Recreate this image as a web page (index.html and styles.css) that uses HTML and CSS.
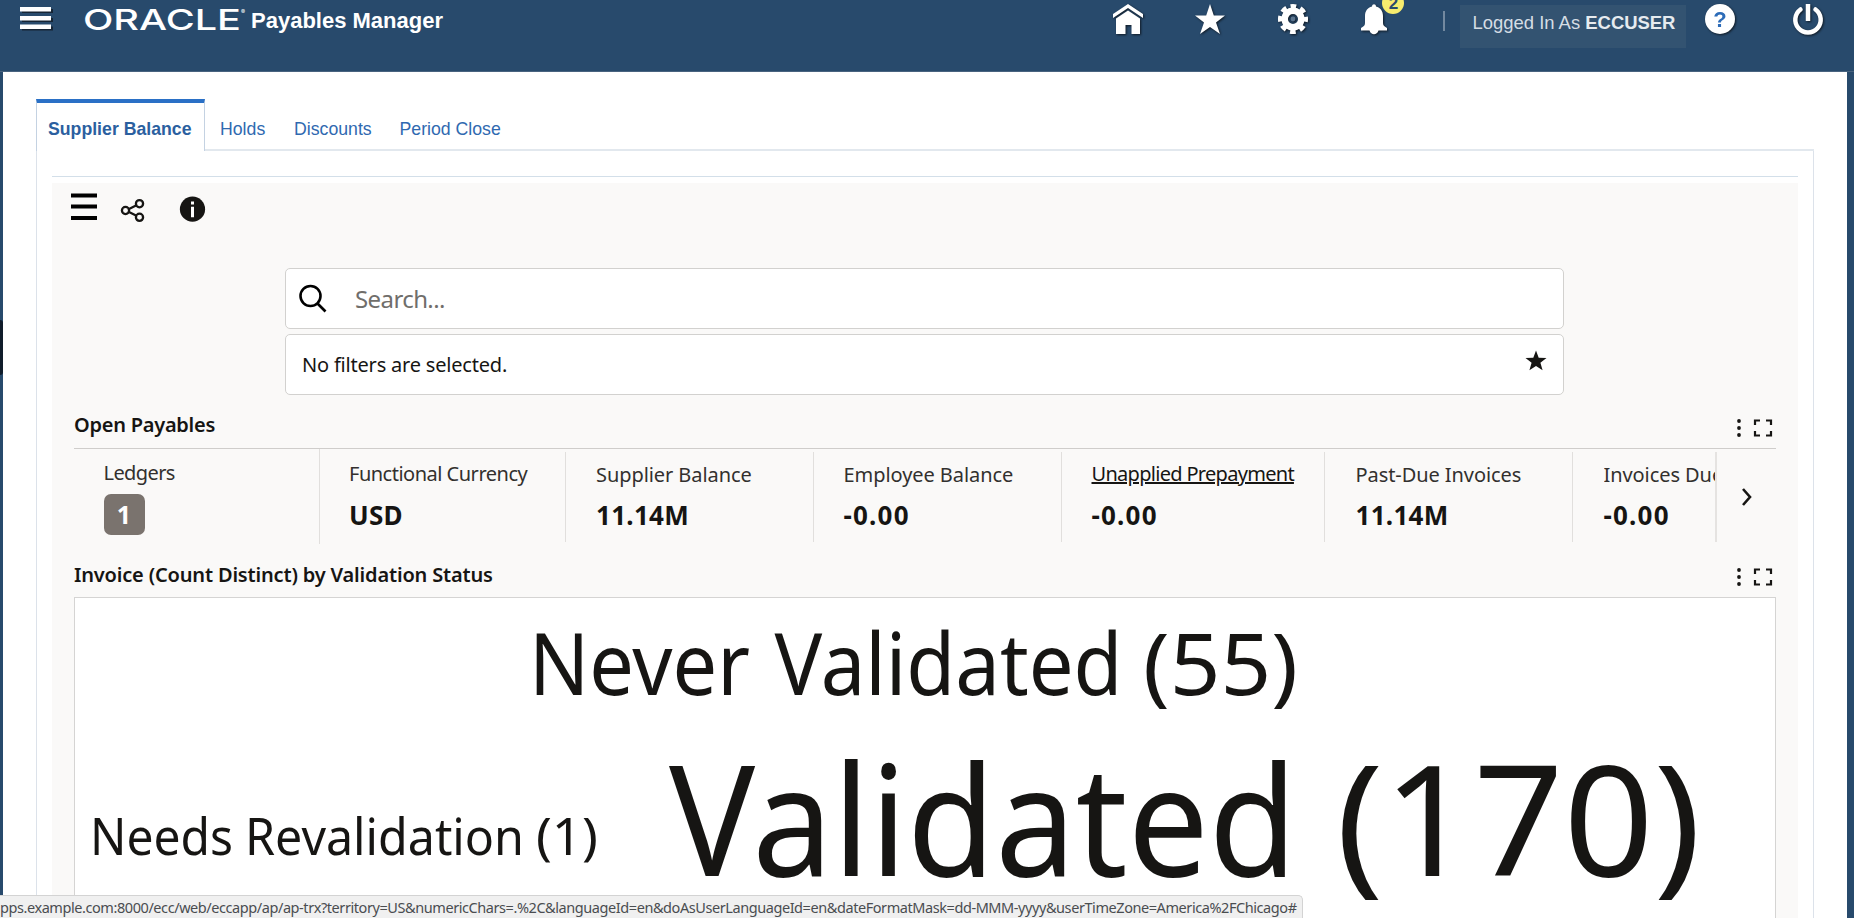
FILE: index.html
```
<!DOCTYPE html>
<html lang="en">
<head>
<meta charset="utf-8">
<title>Payables Manager</title>
<link rel="stylesheet" href="styles.css">
</head>
<body>
<header class="topbar">
  <svg class="menu-icon" width="36" height="28" viewBox="0 0 36 28"><g fill="#111c28" opacity=".8"><path d="M3 4h31v4H3zM3 13h31v4H3zM3 21.500h31v4H3z"/></g><g fill="#fff"><path d="M1 2h31v4.500H1zM1 11h31v4.500H1zM1 19.500h31v4.500H1z"/></g></svg>
  <svg class="logo" width="162" height="32" viewBox="0 0 162 32"><text x="-1" y="24" textLength="158" lengthAdjust="spacingAndGlyphs">ORACLE</text><text class="logo-mark" x="157" y="8">®</text></svg>
  <h1 class="app-title">Payables Manager</h1>
  <div class="tools">
    <svg class="tool" width="34" height="34" viewBox="0 0 34 34"><path fill="#fff" d="M16 0 31 10v4L16 4 1 14v-4zM4 14.500 16 6.500l12 8V30h-8.500V21h-6v9H4z"/></svg>
    <svg class="tool" width="34" height="34" viewBox="0 0 34 34"><path fill="#fff" d="m16 0 3.800 11.400H31l-9 7 4 11.600-10-7-10 7 4-11.600-9-7h11.200z"/></svg>
    <svg class="tool" width="34" height="34" viewBox="0 0 34 34"><g fill="none" stroke="#fff"><circle cx="16" cy="15" r="8.300" stroke-width="6.500"/><circle cx="16" cy="15" r="12.800" stroke-width="4.500" stroke-dasharray="5.600 4.453" stroke-dashoffset="2.800"/></g><circle cx="16" cy="15" r="2.400" fill="#5d7690"/></svg>
    <div class="bell"><svg class="tool" width="34" height="34" viewBox="0 0 34 34"><path fill="#fff" d="M13 2.500C13-.5 17-.5 17 2.500 21.500 3.800 24 7 24 12v7c0 2 1 3.500 4 5v2.500h-8.500C18 31.500 12 31.500 10.500 26.500H2V24c3-1.500 4-3 4-5v-7c0-5 2.500-8.200 7-9.500z"/></svg><span class="badge">2</span></div>
    <span class="divider"></span>
    <div class="user">Logged In As <b>ECCUSER</b></div>
    <svg class="tool help" width="34" height="34" viewBox="0 0 34 34"><circle cx="16" cy="15" r="15" fill="#fff"/><text class="help-mark" x="16" y="23" text-anchor="middle">?</text></svg>
    <svg class="tool" width="34" height="34" viewBox="0 0 34 34"><g fill="none" stroke="#fff" stroke-width="4.500"><path d="M8.500 5.500a12.700 12.700 0 1 0 15 0" stroke-linecap="round"/><path d="M16 0v17"/></g></svg>
  </div>
</header>
<main class="page">
  <nav class="tabs">
    <a class="tab active">Supplier Balance</a><a class="tab holds">Holds</a><a class="tab disc">Discounts</a><a class="tab close">Period Close</a>
  </nav>
  <div class="frame">
    <div class="panel">
      <div class="actions">
        <svg width="150" height="40" viewBox="0 0 150 40"><path d="M1 10.500h26v4H1zM1 21.500h26v4H1zM1 33h26v4H1z"/><g fill="none" stroke="#161513" stroke-width="2.300"><circle cx="55.500" cy="27.500" r="3.600"/><circle cx="69.500" cy="20.700" r="3.600"/><circle cx="69.500" cy="34.300" r="3.600"/><path d="m59 26 7-3.500M59 29l7 3.500"/></g><circle cx="122.500" cy="26.200" r="12.600" fill="#161513"/><path fill="#fff" d="M121 18.500h3v3h-3zM121 23.700h3v10.500h-3z"/></svg>
      </div>
      <div class="searchbox">
        <svg width="30" height="30" viewBox="0 0 30 30" fill="none" stroke="#000" stroke-width="2.600"><circle cx="11.500" cy="12" r="10"/><path d="m18.500 19.500 8 8"/></svg>
        <span class="placeholder">Search...</span>
      </div>
      <div class="filterbox"><span class="nofilter">No filters are selected.</span><svg width="22" height="22" viewBox="0 0 22 22"><path fill="#161513" d="m11 .5 2.700 7.200 7.800.3-6.100 4.700 2.200 7.600L11 15.900l-6.600 4.400 2.200-7.600L.5 8l7.800-.3z"/></svg></div>
      <div class="section-head first"><h2 class="t1">Open Payables</h2>
        <svg width="40" height="20" viewBox="0 0 40 20"><g fill="#161513"><circle cx="3" cy="3" r="1.900"/><circle cx="3" cy="10" r="1.900"/><circle cx="3" cy="17" r="1.900"/></g><path fill="none" stroke="#161513" stroke-width="2.200" d="M19 7V2.500h5M30 2.500h5V7M19 13v4.500h5M30 17.500h5V13"/></svg></div>
      <div class="kpis">
        <div class="kpi k1"><span class="label">Ledgers</span><span class="chip">1</span></div>
        <div class="kpi k2"><span class="label">Functional Currency</span><span class="value">USD</span></div>
        <div class="kpi k3"><span class="label">Supplier Balance</span><span class="value">11.14M</span></div>
        <div class="kpi k4"><span class="label">Employee Balance</span><span class="value neg">-0.00</span></div>
        <div class="kpi k5"><span class="label link">Unapplied Prepayment</span><span class="value neg">-0.00</span></div>
        <div class="kpi k6"><span class="label">Past-Due Invoices</span><span class="value">11.14M</span></div>
        <div class="kpi k7"><span class="label">Invoices Due</span><span class="value neg">-0.00</span></div>
        <div class="next"><svg width="12" height="20" viewBox="0 0 12 20"><path d="m2 2 7 8-7 8" fill="none" stroke="#161513" stroke-width="2.600"/></svg></div>
      </div>
      <div class="section-head second"><h2 class="t2">Invoice (Count Distinct) by Validation Status</h2>
        <svg width="40" height="20" viewBox="0 0 40 20"><g fill="#161513"><circle cx="3" cy="3" r="1.900"/><circle cx="3" cy="10" r="1.900"/><circle cx="3" cy="17" r="1.900"/></g><path fill="none" stroke="#161513" stroke-width="2.200" d="M19 7V2.500h5M30 2.500h5V7M19 13v4.500h5M30 17.500h5V13"/></svg></div>
      <div class="cloud">
        <svg width="1700" height="330" viewBox="75 598 1700 330">
          <g font-size="85"><text x="529" y="694.500" textLength="221" lengthAdjust="spacingAndGlyphs">Never</text><text x="774.500" y="694.500" textLength="348" lengthAdjust="spacingAndGlyphs">Validated</text><text x="1143" y="694.500" textLength="155" lengthAdjust="spacingAndGlyphs">(55)</text></g>
          <g font-size="153"><text x="669" y="875.500" textLength="628" lengthAdjust="spacingAndGlyphs">Validated</text><text x="1336" y="875.500" textLength="365" lengthAdjust="spacingAndGlyphs">(170)</text></g>
          <g font-size="51"><text x="90" y="855" textLength="143" lengthAdjust="spacingAndGlyphs">Needs</text><text x="245" y="855" textLength="279" lengthAdjust="spacingAndGlyphs">Revalidation</text><text x="536" y="855" textLength="62" lengthAdjust="spacingAndGlyphs">(1)</text></g>
        </svg>
      </div>
    </div>
  </div>
</main>
<span class="handle"></span>
<div class="status"><span>pps.example.com:8000/ecc/web/eccapp/ap/ap-trx?territory=US&amp;numericChars=.%2C&amp;languageId=en&amp;doAsUserLanguageId=en&amp;dateFormatMask=dd-MMM-yyyy&amp;userTimeZone=America%2FChicago#</span></div>
</body>
</html>
```
FILE: styles.css
```
* { box-sizing: border-box; }
body { margin: 0; width: 1854px; height: 918px; overflow: hidden; background: #284a6c; font-family: "Noto Sans", "Open Sans", sans-serif; color: #161513; }
.topbar { height: 72px; border-bottom: 1px solid #48637f; display: flex; align-items: flex-start; padding-left: 19px; font-family: "Liberation Sans", Arial, sans-serif; }
.menu-icon { margin-top: 5px; flex: none; }
.logo { margin: 6px 0 0 29px; flex: none; fill: #fff; font: 500 29px Inter, sans-serif; overflow: visible; }
.logo-mark { font-size: 6px; }
.app-title { margin: 7px 0 0 5px; font-size: 22px; line-height: 27px; color: #fff; white-space: nowrap; width: 200px; }
.tools { display: flex; align-items: flex-start; margin-left: 669px; }
.tool { display: block; margin: 4px 48.500px 0 0; filter: drop-shadow(1.500px 1.500px 1px #101a24); overflow: visible; flex: none; }
.bell { position: relative; width: 84px; }
.badge { position: absolute; left: 23px; top: -8px; width: 22px; height: 22px; border-radius: 11px; background: #f7ec6e; color: #284a6c; font-size: 17px; line-height: 23px; text-align: center; font-weight: 700; }
.divider { width: 2px; height: 20px; margin-top: 11px; background: #7389a0; }
.user { margin: 5px 18px 0 15px; width: 226px; height: 43px; background: #335371; color: #d5dde4; font-size: 18.450px; line-height: 35px; padding-left: 12px; white-space: nowrap; flex: none; }
.user b { color: #e6ebef; }
.help { margin-right: 54px; }
.help-mark { font: 700 22px "Liberation Sans", Arial, sans-serif; fill: #2d6cb8; }
.page { margin-left: 3px; width: 1844px; height: 846px; background: #fff; padding: 27px 33px 0; }
.tabs { display: flex; height: 52px; font: 17.700px/20px "Liberation Sans", Arial, sans-serif; color: #2f69b0; border-bottom: 2px solid #e2e8ee; }
.tab { padding-top: 20px; height: 50px; white-space: nowrap; }
.tab.active { width: 169px; height: 52px; padding: 16px 0 0 11px; border: 1px solid #c4d2e2; border-top: 4px solid #2a70c6; border-bottom: 0; background: #fff; font-weight: 700; color: #2b5f9f; }
.holds { margin-left: 15px; width: 74px; }
.disc { width: 105.500px; }
.frame { border: 1px solid #dce2ea; border-width: 0 1px 0 1px; height: 767px; padding: 25px 15px 0; }
.panel { border-top: 1px solid #d3dfe9; height: 742px; padding: 6px 22px 0; background: #faf9f8; box-shadow: inset 0 6px #fff; }
.actions { margin-left: -4px; height: 85px; }
.actions svg { display: block; }
.searchbox, .filterbox { margin-left: 211px; width: 1279px; height: 61px; border: 1px solid #d2d1cf; border-radius: 5px; background: #fff; display: flex; align-items: center; }
.searchbox { padding-left: 13px; }
.placeholder { font-size: 24px; color: #706e6b; margin-left: 26px; letter-spacing: -.6px; }
.filterbox { margin-top: 5px; padding: 0 16px; font-size: 20px; letter-spacing: -.2px; }
.filterbox svg { margin: -7px 0 0 auto; }
.section-head { display: flex; justify-content: space-between; align-items: center; }
.section-head h2 { margin: 0; font-size: 20px; line-height: 28px; font-weight: 600; white-space: nowrap; letter-spacing: -.17px; }
.section-head svg { margin-top: 5px; }
.first { height: 53px; padding-top: 8px; }
.first h2 { margin-top: -2px; letter-spacing: -.25px; }
.kpis { display: flex; height: 97px; border-top: 1px solid #cfcdcb; overflow: hidden; }
.kpi { border-right: 1px solid #e1dfdd; margin-top: 3px; height: 90px; padding: 9px 0 0 30px; flex: none; white-space: nowrap; }
.label { display: block; font-size: 20px; line-height: 28px; height: 32px; color: #32302e; letter-spacing: -.07px; }
.value { display: block; font-size: 26px; line-height: 34px; margin-top: 5px; font-weight: 700; letter-spacing: .3px; }
.value.neg { letter-spacing: 1.200px; }
.k1 { width: 246px; margin-top: 0; height: 95px; padding: 10px 0 0 29.500px; }
.k1 .label { letter-spacing: -.6px; }
.k2 { width: 246px; padding: 8px 0 0 29px; }
.k2 .label { letter-spacing: -.5px; }
.k2 .value, .k5 .value { margin-top: 6px; }
.k3 { width: 247.500px; } .k4 { width: 248px; }
.k5 { width: 263px; padding-top: 8px; }
.k5 .label { letter-spacing: -.7px; text-decoration: underline; color: #161513; }
.k6 { width: 248px; padding-left: 31px; }
.k7 { width: 144px; padding-left: 31px; border-right: 2px solid #e5e3e1; }
.k7 .label { width: 111px; overflow: hidden; }
.chip { display: block; width: 41px; height: 41px; margin-top: 3px; border-radius: 7px; background: #7a736e; color: #fff; font-size: 25px; font-weight: 700; line-height: 41px; text-align: center; }
.next { padding: 38px 0 0 24px; }
.second { height: 52px; padding-top: 8px; }
.second svg { margin-top: 4px; }
.cloud { border: 1px solid #d5d4d3; height: 340px; background: #fff; fill: #161513; }
.cloud svg { display: block; }
.handle { position: absolute; left: 0; top: 320px; width: 3px; height: 55px; background: #101c2a; border-radius: 0 3px 3px 0; }
.status { position: absolute; left: 0; top: 895px; width: 1303px; height: 23px; background: #f0f0f0; border: 1px solid #d3d3d3; border-width: 1px 1px 0 0; border-radius: 0 5px 0 0; font-size: 14.500px; line-height: 23px; letter-spacing: -.43px; color: #4a4d50; white-space: nowrap; overflow: hidden; }
```
